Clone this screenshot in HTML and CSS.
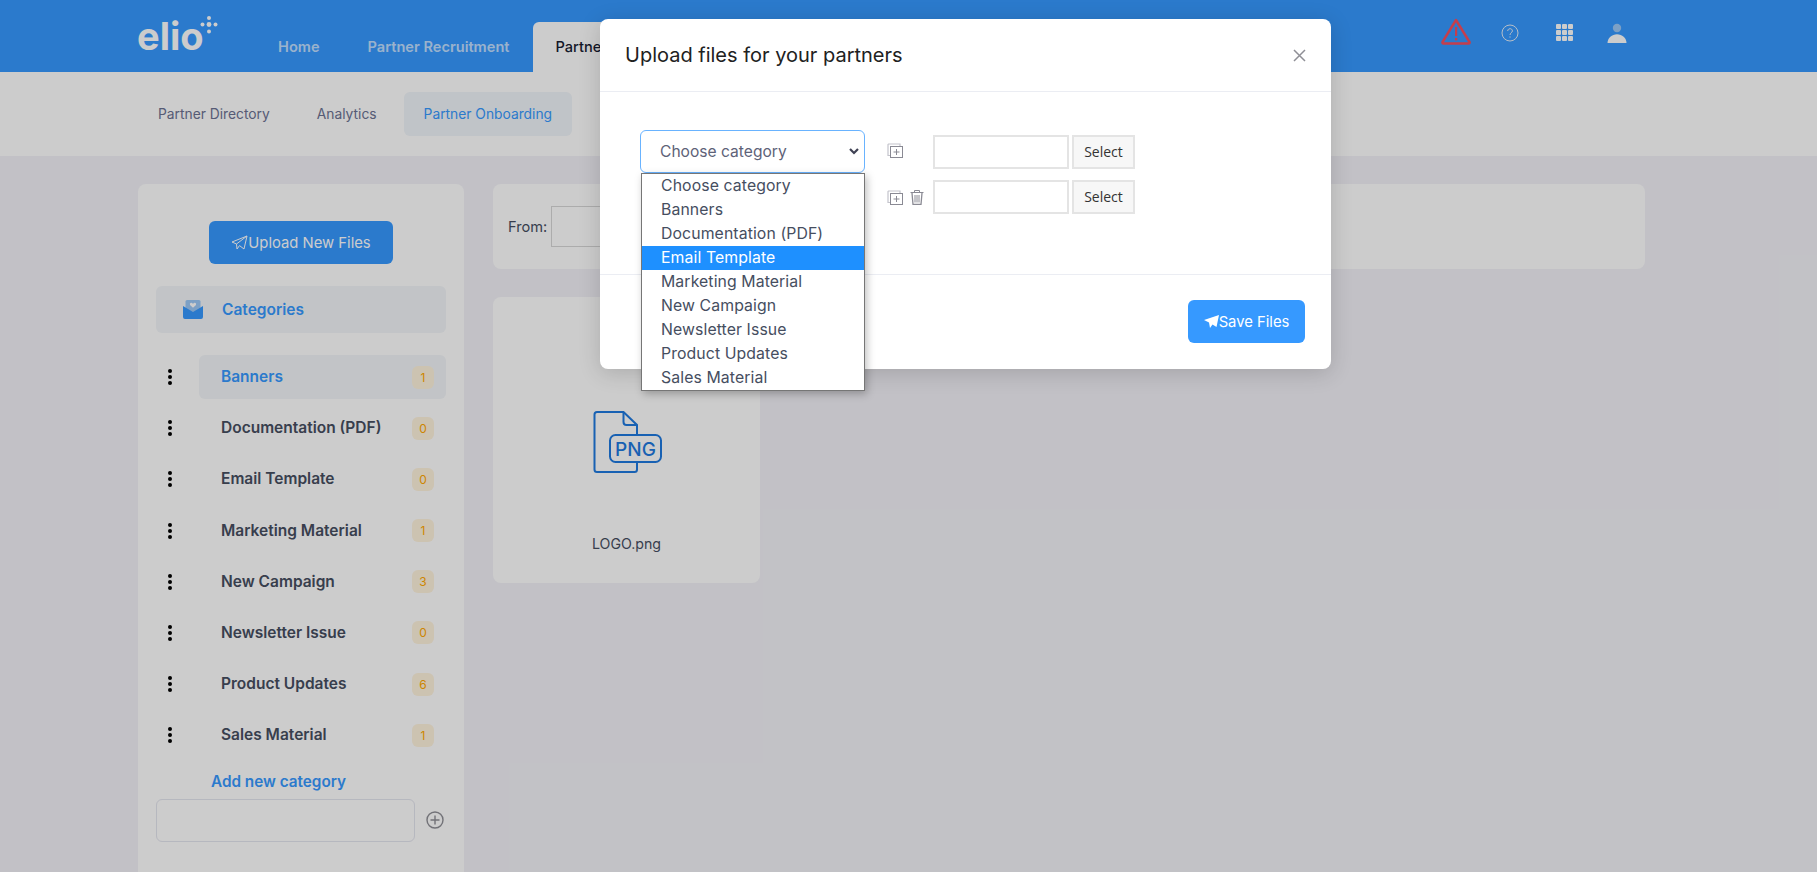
FILE: index.html
```html
<!DOCTYPE html>
<html lang="en">

<head>
  <meta charset="UTF-8">
  <meta name="viewport" content="width=device-width, initial-scale=1.0">
  <title>Partner Onboarding</title>
  <link rel="stylesheet" href="styles.css">
</head>

<body>
  <header class="topbar">
    <div class="logo">
      <span class="logo-word">elio</span>
      <svg class="logo-dots" width="18" height="18" viewBox="0 0 18 18">
        <circle cx="9" cy="2" r="2" /><circle cx="9" cy="8.5" r="2.4" /><circle cx="9" cy="15.5" r="2" />
        <circle cx="2.5" cy="8.5" r="2" /><circle cx="15.5" cy="8.5" r="2" />
      </svg>
    </div>
    <nav class="mainnav">
      <a class="mainnav-item">Home</a>
      <a class="mainnav-item">Partner Recruitment</a>
      <a class="mainnav-item mainnav-active">Partners</a>
    </nav>
    <div class="topicons">
      <svg class="icon-warn" width="30" height="27" viewBox="0 0 30 27" fill="none">
        <path d="M15 2 L28.5 24 Q29 25.5 27.5 25.5 H2.5 Q1 25.5 1.5 24 Z" stroke="#f64e60" stroke-width="2.4" stroke-linejoin="round" />
        <rect x="14" y="9" width="2.2" height="9" fill="#f64e60" />
        <rect x="14" y="20" width="2.2" height="2.4" fill="#f64e60" />
      </svg>
      <svg class="icon-help" width="18" height="18" viewBox="0 0 18 18" fill="none">
        <circle cx="9" cy="9" r="8" stroke="#e4eefa" stroke-width="1" />
        <path d="M6.7 7 C6.7 3.9 11.4 4 11.4 6.9 C11.4 8.8 9 8.8 9 11" stroke="#e4eefa" stroke-width="1" />
        <rect x="8.5" y="12.4" width="1" height="1.2" fill="#e4eefa" />
      </svg>
      <div class="icon-grid">
        <i></i><i></i><i></i><i></i><i></i><i></i><i></i><i></i><i></i>
      </div>
      <svg class="icon-user" width="20" height="20" viewBox="0 0 20 20">
        <circle cx="10" cy="5" r="4.2" fill="#9cc8f7" />
        <path d="M0.5 20 C0.5 15 5 11.3 10 11.3 C15 11.3 19.5 15 19.5 20 Z" fill="#fff" />
      </svg>
    </div>
  </header>

  <nav class="subnav">
    <a class="subnav-item">Partner Directory</a>
    <a class="subnav-item">Analytics</a>
    <a class="subnav-item subnav-active">Partner Onboarding</a>
  </nav>

  <main class="content">
    <aside class="side-card">
      <button class="btn btn-upload">
        <svg width="17" height="16" viewBox="0 0 17 16" fill="none" stroke="#fff" stroke-width="1" stroke-linejoin="round">
          <path d="M16 1 L1 7 L5.5 9 L16 1 L13 14 L8.5 10.6 L6 14 L5.5 9" />
        </svg>Upload New Files
      </button>
      <div class="cat-head">
        <svg width="20" height="19" viewBox="0 0 20 19">
          <path d="M2.5 9 V1.5 Q2.5 0 4 0 H16 Q17.5 0 17.5 1.5 V9 L10 13 Z" fill="#9cc8f7" />
          <path d="M10 7.8 L7 5 Q6.3 3 8 2.8 Q9.3 2.7 10 3.9 Q10.7 2.7 12 2.8 Q13.7 3 13 5 Z" fill="#fff" />
          <path d="M0 6 L10 12 L20 6 V17 Q20 19 18 19 H2 Q0 19 0 17 Z" fill="#3699ff" />
        </svg>
        <span>Categories</span>
      </div>
      <ul class="cat-list">
        <li class="cat-item"><span class="cat-dots"><i></i><i></i><i></i></span><div class="cat-row cat-active"><span>Banners</span><b class="badge">1</b></div></li>
        <li class="cat-item"><span class="cat-dots"><i></i><i></i><i></i></span><div class="cat-row"><span>Documentation (PDF)</span><b class="badge">0</b></div></li>
        <li class="cat-item"><span class="cat-dots"><i></i><i></i><i></i></span><div class="cat-row"><span>Email Template</span><b class="badge">0</b></div></li>
        <li class="cat-item"><span class="cat-dots"><i></i><i></i><i></i></span><div class="cat-row"><span>Marketing Material</span><b class="badge">1</b></div></li>
        <li class="cat-item"><span class="cat-dots"><i></i><i></i><i></i></span><div class="cat-row"><span>New Campaign</span><b class="badge">3</b></div></li>
        <li class="cat-item"><span class="cat-dots"><i></i><i></i><i></i></span><div class="cat-row"><span>Newsletter Issue</span><b class="badge">0</b></div></li>
        <li class="cat-item"><span class="cat-dots"><i></i><i></i><i></i></span><div class="cat-row"><span>Product Updates</span><b class="badge">6</b></div></li>
        <li class="cat-item"><span class="cat-dots"><i></i><i></i><i></i></span><div class="cat-row"><span>Sales Material</span><b class="badge">1</b></div></li>
      </ul>
      <a class="add-link">Add new category</a>
      <div class="add-row">
        <input class="add-input" type="text">
        <svg width="18" height="18" viewBox="0 0 18 18" fill="none" stroke="#8f8f96" stroke-width="1.4">
          <circle cx="9" cy="9" r="8" /><path d="M9 4.5 V13.5 M4.5 9 H13.5" />
        </svg>
      </div>
    </aside>

    <section class="files">
      <div class="filter-card">
        <label class="filter-label">From:</label>
        <input class="filter-input" type="text">
      </div>
      <div class="file-card">
        <svg class="file-icon" width="70" height="62" viewBox="0 0 70 62" fill="none" stroke="#1f7ae0" stroke-width="2">
          <path d="M44 24 V14 L30.5 1 H4 Q1.5 1 1.5 3.5 V58.5 Q1.5 61 4 61 H41.5 Q44 61 44 58.5 V51" />
          <path d="M30.5 1 V11 Q30.5 14 33.5 14 H44" />
          <rect x="17" y="24" width="51" height="27" rx="5.5" />
          <text class="file-icon-text" x="42.5" y="44.5" text-anchor="middle">PNG</text>
        </svg>
        <span class="file-name">LOGO.png</span>
      </div>
    </section>
  </main>

  <div class="backdrop"></div>

  <div class="modal">
    <div class="modal-head">
      <h2 class="modal-title">Upload files for your partners</h2>
      <svg width="13" height="13" viewBox="0 0 13 13" stroke="#8f8f96" stroke-width="1.5">
        <path d="M1 1 L12 12 M12 1 L1 12" />
      </svg>
    </div>
    <div class="modal-body">
      <div class="up-row">
        <div class="picker">
          <div class="picker-box">
            <span>Choose category</span>
            <svg width="10" height="7" viewBox="0 0 10 7" fill="none" stroke="#3f4254" stroke-width="2.2">
              <path d="M1 1 L5 5 L9 1" />
            </svg>
          </div>
          <ul class="picker-list">
            <li>Choose category</li>
            <li>Banners</li>
            <li>Documentation (PDF)</li>
            <li class="picker-on">Email Template</li>
            <li>Marketing Material</li>
            <li>New Campaign</li>
            <li>Newsletter Issue</li>
            <li>Product Updates</li>
            <li>Sales Material</li>
          </ul>
        </div>
        <div class="up-tools">
          <svg class="copy-first" width="16" height="15" viewBox="0 0 16 15" fill="none">
            <path d="M3 12.5 H1 V1.5 L1.5 1 H13 V3" stroke="#c4c4cc" stroke-width="1.2" />
            <rect x="3.5" y="3.5" width="12" height="11" stroke="#8a8a94" />
            <path d="M9.5 6 V12 M6.5 9 H12.5" stroke="#8a8a94" />
          </svg>
        </div>
        <input class="up-input" type="text">
        <button class="up-select">Select</button>
      </div>
      <div class="up-row up-row-second">
        <div class="picker-slot"></div>
        <div class="up-tools">
          <svg width="16" height="15" viewBox="0 0 16 15" fill="none">
            <path d="M3 12.5 H1 V1.5 L1.5 1 H13 V3" stroke="#c4c4cc" stroke-width="1.2" />
            <rect x="3.5" y="3.5" width="12" height="11" stroke="#8a8a94" />
            <path d="M9.5 6 V12 M6.5 9 H12.5" stroke="#8a8a94" />
          </svg>
          <svg width="14" height="15" viewBox="0 0 14 15" fill="none" stroke="#8a8a94">
            <path d="M0.5 2.5 H13.5 M4.5 2.5 V0.5 H9.5 V2.5" />
            <path d="M2 3 L3 14.5 H11 L12 3" stroke-width="1.3" />
            <path d="M5 5 V12.5 M7 5 V12.5 M9 5 V12.5" />
          </svg>
        </div>
        <input class="up-input" type="text">
        <button class="up-select">Select</button>
      </div>
    </div>
    <div class="modal-foot">
      <button class="btn btn-save">
        <svg width="15" height="13" viewBox="0 0 15 13" fill="#fff">
          <path d="M15 0 L0 5 L4 7 L5 7.5 L6 13 L8.5 9.5 L12.5 12 Z" />
        </svg>Save Files
      </button>
    </div>
  </div>
</body>

</html>
```

FILE: styles.css
```css
* {
  box-sizing: border-box;
}

html,
body {
  height: 872px;
  margin: 0;
  overflow: hidden;
}

body {
  background-color: #f3f2f8;
  color: #464e5f;
  font-family: Inter, "Open Sans", sans-serif;
  font-size: 14px;
  position: relative;
}

.topbar {
  background-color: #3699ff;
  display: flex;
  height: 72px;
  padding-left: 138px;
}

.logo {
  display: flex;
  align-items: flex-start;
  width: 116px;
}

.logo-word {
  color: #fff;
  font-size: 38px;
  font-weight: 700;
  line-height: 38px;
  margin: 17px 0 0 -1px;
}

.logo-dots {
  fill: #fff;
  margin: 16px 0 0 -4px;
}

.mainnav {
  display: flex;
  align-items: flex-end;
  height: 72px;
}

.mainnav-item {
  color: rgba(255, 255, 255, 0.7);
  font-size: 14.6px;
  font-weight: 600;
  line-height: 50px;
  height: 50px;
  padding: 0 24px;
}

.mainnav-active {
  background-color: #fff;
  border-radius: 6px 6px 0 0;
  color: #181c32;
  font-weight: 500;
  padding: 0 120px 0 22px;
}

.topicons {
  position: absolute;
  top: 18px;
  left: 1441px;
  display: flex;
  align-items: flex-start;
}

.icon-help {
  margin: 6px 0 0 30px;
}

.icon-grid {
  display: grid;
  grid-template-columns: repeat(3, 5px);
  gap: 1px;
  margin: 6px 0 0 37px;
}

.icon-grid i {
  background-color: #fff;
  border-radius: 1px;
  height: 5px;
}

.icon-user {
  margin: 5px 0 0 34px;
}

.subnav {
  background-color: #fff;
  display: flex;
  align-items: center;
  gap: 7px;
  height: 84px;
  padding-left: 138px;
}

.subnav-item {
  border-radius: 6px;
  color: #6c7293;
  font-size: 13.8px;
  line-height: 44px;
  padding: 0 20px;
}

.subnav-active {
  background-color: #f0f5fa;
  color: #3699ff;
}

.content {
  display: flex;
  gap: 29px;
  padding: 28px 172px 0 138px;
}

.side-card {
  background-color: #fff;
  border-radius: 8px;
  display: flex;
  flex-direction: column;
  height: 720px;
  padding: 37px 18px 0;
  width: 326px;
}

.btn {
  background-color: #3699ff;
  border: none;
  border-radius: 6px;
  color: #fff;
  display: flex;
  align-items: center;
  justify-content: center;
  font-family: inherit;
  font-size: 14.8px;
  font-weight: 400;
  height: 43px;
}

.btn-upload {
  align-self: center;
  width: 184px;
}

.cat-head {
  align-items: center;
  background-color: #f3f6f9;
  border-radius: 6px;
  color: #3699ff;
  display: flex;
  font-size: 15.5px;
  font-weight: 600;
  gap: 19px;
  height: 47px;
  margin-top: 22px;
  padding-left: 27px;
}

.cat-list {
  list-style: none;
  margin: 22px 0 0;
  padding: 0;
}

.cat-item {
  align-items: center;
  display: flex;
  height: 44px;
  margin-bottom: 7.2px;
}

.cat-dots {
  display: flex;
  flex-direction: column;
  gap: 2px;
  margin-left: 12px;
  width: 31px;
}

.cat-dots i {
  background-color: #000;
  border-radius: 50%;
  height: 4px;
  width: 4px;
}

.cat-row {
  align-items: center;
  border-radius: 6px;
  color: #464e5f;
  display: flex;
  flex: 1;
  font-size: 15.5px;
  font-weight: 600;
  height: 44px;
  justify-content: space-between;
  padding: 0 12px 0 22px;
}

.cat-row span {
  margin-top: -1px;
}

.cat-active {
  background-color: #f3f6f9;
  color: #3699ff;
}

.badge {
  align-items: center;
  background-color: #fff4de;
  border-radius: 6px;
  color: #ffa800;
  display: flex;
  font-size: 12px;
  font-weight: 400;
  height: 23px;
  justify-content: center;
  width: 22px;
}

.add-link {
  color: #3699ff;
  font-size: 15.3px;
  font-weight: 600;
  line-height: 20px;
  margin-top: 7px;
  padding-left: 55px;
}

.add-row {
  align-items: center;
  display: flex;
  gap: 11px;
  margin-top: 7px;
}

.add-input {
  background: transparent;
  border: 1px solid #e4e6ef;
  border-radius: 6px;
  height: 43px;
  width: 259px;
}

.files {
  flex: 1;
}

.filter-card {
  align-items: center;
  background-color: #fff;
  border-radius: 8px;
  display: flex;
  gap: 4px;
  height: 85px;
  padding-left: 15px;
}

.filter-label {
  color: #464e5f;
  font-size: 14.6px;
}

.filter-input {
  border: 1px solid #d8d8d8;
  height: 41px;
  width: 160px;
}

.file-card {
  align-items: center;
  background-color: #fff;
  border-radius: 8px;
  display: flex;
  flex-direction: column;
  height: 286px;
  margin-top: 28px;
  padding-top: 114px;
  width: 267px;
}

.file-icon {
  margin-left: 3px;
}

.file-icon-text {
  fill: #1f7ae0;
  stroke: none;
  font-family: Inter, sans-serif;
  font-size: 19px;
  font-weight: 500;
}

.file-name {
  color: #464e5f;
  font-size: 14.2px;
  margin-top: 62px;
}

.backdrop {
  background-color: rgba(0, 0, 0, 0.2);
  inset: 0;
  position: absolute;
}

.modal {
  background-color: #fff;
  border-radius: 8px;
  box-shadow: 0 4px 22px rgba(0, 0, 0, 0.16);
  left: 600px;
  position: absolute;
  top: 19px;
  width: 731px;
}

.modal-head {
  align-items: center;
  border-bottom: 1px solid #ebedf3;
  display: flex;
  height: 73px;
  justify-content: space-between;
  padding: 0 25px;
}

.modal-title {
  color: #212121;
  font-size: 20px;
  font-weight: 400;
  margin: 0;
}

.modal-body {
  height: 182px;
  padding: 38px 0 0 40px;
}

.up-row {
  align-items: center;
  display: flex;
  height: 43px;
}

.up-row-second {
  height: 34px;
  margin-top: 7px;
}

.picker {
  position: relative;
  width: 225px;
}

.picker-slot {
  width: 225px;
}

.picker-box {
  align-items: center;
  border: 1px solid #69b3ff;
  border-radius: 6px;
  color: #5e6278;
  display: flex;
  font-size: 15.6px;
  height: 43px;
  justify-content: space-between;
  padding: 0 5px 0 19px;
}

.picker-list {
  background-color: #fff;
  border: 1px solid #767676;
  box-shadow: 2px 3px 8px rgba(0, 0, 0, 0.25);
  color: #464e5f;
  font-size: 15.8px;
  left: 1px;
  letter-spacing: 0.1px;
  list-style: none;
  margin: 0;
  padding: 0;
  position: absolute;
  top: 43px;
  width: 224px;
  z-index: 2;
}

.picker-list li {
  height: 24px;
  line-height: 23px;
  padding-left: 19px;
}

.picker-list .picker-on {
  background-color: #1e90ff;
  color: #fff;
}

.up-tools {
  align-items: center;
  display: flex;
  gap: 7px;
  margin-left: 22px;
  width: 46px;
}

.copy-first {
  margin-top: -2px;
}

.up-input {
  background: #fff;
  border: 2px solid #e4e4e4;
  height: 34px;
  width: 136px;
}

.up-select {
  background-color: #f7f7f7;
  border: 2px solid #e4e4e4;
  color: #333;
  font-family: "Open Sans", sans-serif;
  font-size: 14px;
  height: 34px;
  margin-left: 3px;
  padding: 0 0 1px;
  width: 63px;
}

.modal-foot {
  border-top: 1px solid #ebedf3;
  display: flex;
  justify-content: flex-end;
  height: 95px;
  padding: 25px 26px 0 0;
}

.btn-save {
  width: 117px;
}
```
